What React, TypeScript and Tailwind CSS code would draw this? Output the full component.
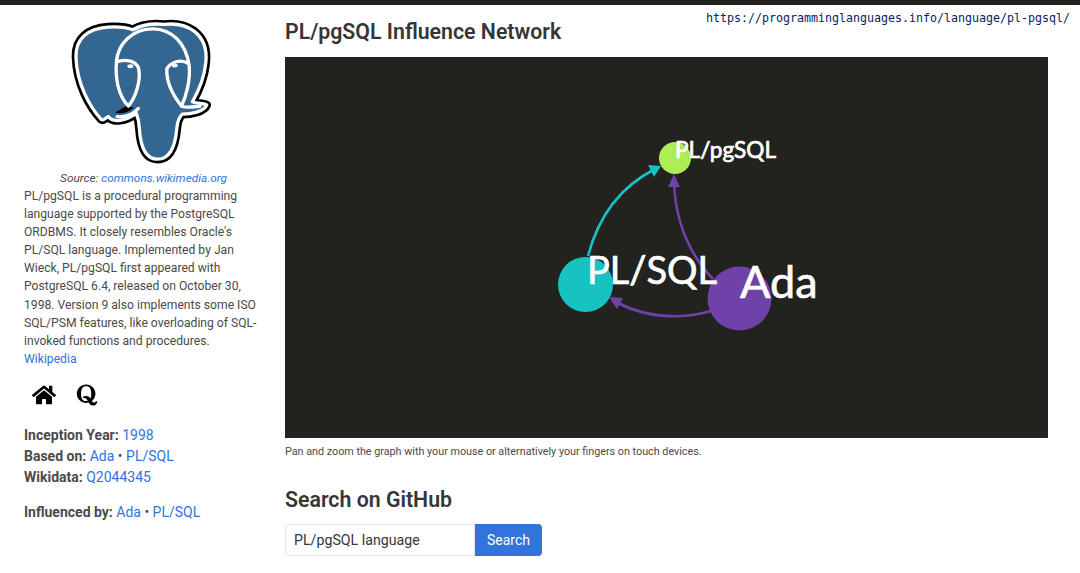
import { FaHome, FaQuora } from 'react-icons/fa';

function ElephantLogo() {
    const body =
        'M130 358 C95 320 56 250 54 170 C52 115 90 84 150 80 C180 78 205 80 225 88 C250 74 285 68 320 72 C350 68 385 74 410 92 C440 115 450 150 445 190 C440 235 425 270 405 305 C420 312 440 308 448 315 C440 335 400 342 375 342 C365 350 360 365 358 385 C355 420 345 478 300 478 C262 478 248 435 245 385 C244 365 240 350 236 340 C205 362 165 370 152 350 C143 352 138 364 130 358 Z';
    return (
        <svg viewBox="30 50 440 445" className="w-[146px] h-[148px]">
            <path d={body} fill="#000" stroke="#000" strokeWidth="26" strokeLinejoin="round" />
            <path d={body} fill="#336791" stroke="#fff" strokeWidth="10" strokeLinejoin="round" />
            <path d="M172 338 L205 318 L228 322 C215 336 195 342 172 338 Z" fill="#000" />
            <g fill="none" stroke="#fff" strokeWidth="10" strokeLinecap="round" strokeLinejoin="round">
                <path d="M176 185 C180 130 225 85 285 85 C345 85 385 130 395 195 C400 240 385 290 372 318 C350 290 325 250 328 205 C340 185 370 175 393 190" />
                <path d="M176 185 C172 230 180 285 212 318 C235 290 250 240 243 205 C235 180 200 175 176 185 Z" />
                <path d="M372 318 C385 325 410 320 428 318" />
                <path d="M242 325 C225 345 200 352 178 350" />
            </g>
            <ellipse cx="218" cy="198" rx="9" ry="6" fill="#fff" />
            <ellipse cx="352" cy="196" rx="9" ry="6" fill="#fff" />
        </svg>
    );
}

function InfluenceGraph() {
    return (
        <svg viewBox="285 57 763 381" className="w-full h-[381px] block bg-[#22221e]">
            <path d="M588 256 Q604 195 655 169" fill="none" stroke="#17c3c1" strokeWidth="2.6" />
            <path d="M661 166 L648 165 L654 177 Z" fill="#17c3c1" />
            <path d="M713 279 Q676 240 674 182" fill="none" stroke="#6f42a9" strokeWidth="2.6" />
            <path d="M674 174 L668 187 L680 187 Z" fill="#6f42a9" />
            <path d="M711 311 Q660 325 616 302" fill="none" stroke="#6f42a9" strokeWidth="2.6" />
            <path d="M609 297 L617 309 L623 298 Z" fill="#6f42a9" />
            <circle cx="675" cy="158" r="16" fill="#aeee55" />
            <circle cx="585.5" cy="284.5" r="27.5" fill="#17c3c1" />
            <circle cx="739.5" cy="298.5" r="32" fill="#6f42a9" />
            <g fill="#fff" stroke="#fff" strokeWidth="0.7" className="font-['Lato',sans-serif]">
                <text x="675" y="158" fontSize="22.6">PL/pgSQL</text>
                <text x="587" y="284" fontSize="38">PL/SQL</text>
                <text x="740" y="298" fontSize="45">Ada</text>
            </g>
        </svg>
    );
}

export default function App() {
    const link = 'text-[#3273dc]';
    return (
        <div className="relative min-h-[573px] bg-white font-['Roboto',sans-serif] text-[#4a4a4a] overflow-hidden">
            <div className="h-[5px] bg-[#22221e]" />
            <div className="absolute top-[11px] right-[10px] font-['DejaVu_Sans_Mono',monospace] text-[11.63px] leading-[14px] text-[#06245c]">
                https://programminglanguages.info/language/pl-pgsql/
            </div>

            <div className="flex">
                <aside className="w-[285px] shrink-0 pl-6 pr-[26px]">
                    <div className="flex justify-center pt-[12px] pl-[3px] pr-[5px]">
                        <ElephantLogo />
                    </div>
                    <p className="text-center italic text-[11.8px] leading-[18px] pt-[4px] pl-1">
                        Source: <span className={link}>commons.wikimedia.org</span>
                    </p>
                    <p className="text-[12.15px] leading-[18.1px]">
                        PL/pgSQL is a procedural programming language supported by the PostgreSQL ORDBMS. It closely resembles Oracle's PL/SQL language. Implemented by Jan Wieck, PL/pgSQL first appeared with PostgreSQL 6.4, released on October 30, 1998. Version 9 also implements some ISO SQL/PSM features, like overloading of SQL-invoked functions and procedures.{' '}
                        <span className={link}>Wikipedia</span>
                    </p>
                    <div className="flex items-center gap-[19px] pl-2 pt-[15px] pb-[18px] text-black">
                        <FaHome className="w-6 h-6" />
                        <FaQuora className="w-6 h-6" />
                    </div>
                    <div className="text-[14px] leading-[21px]">
                        <div><b className="font-bold">Inception Year:</b> <span className={link}>1998</span></div>
                        <div><b className="font-bold">Based on:</b> <span className={link}>Ada</span> • <span className={link}>PL/SQL</span></div>
                        <div><b className="font-bold">Wikidata:</b> <span className={link}>Q2044345</span></div>
                        <div className="mt-[14px]"><b className="font-bold">Influenced by:</b> <span className={link}>Ada</span> • <span className={link}>PL/SQL</span></div>
                    </div>
                </aside>

                <main className="w-[763px]">
                    <h2 className="text-[21.3px] leading-[26px] font-semibold text-[#363636] pt-[14px] pb-[12px]">PL/pgSQL Influence Network</h2>
                    <InfluenceGraph />
                    <p className="text-[10.77px] leading-[14px] pt-[7px]">Pan and zoom the graph with your mouse or alternatively your fingers on touch devices.</p>
                    <h2 className="text-[21.3px] leading-[26px] font-semibold text-[#363636] pt-[28px] pb-[11px]">Search on GitHub</h2>
                    <div className="flex">
                        <div className="w-[190px] h-[32px] border border-[#e4e4e4] rounded-l-[4px] px-2 text-[14.2px] leading-[30px] text-[#363636]">PL/pgSQL language</div>
                        <button className="w-[67px] h-[32px] bg-[#3273dc] text-white text-[14px] rounded-r-[4px]">Search</button>
                    </div>
                </main>
            </div>
        </div>
    );
}
